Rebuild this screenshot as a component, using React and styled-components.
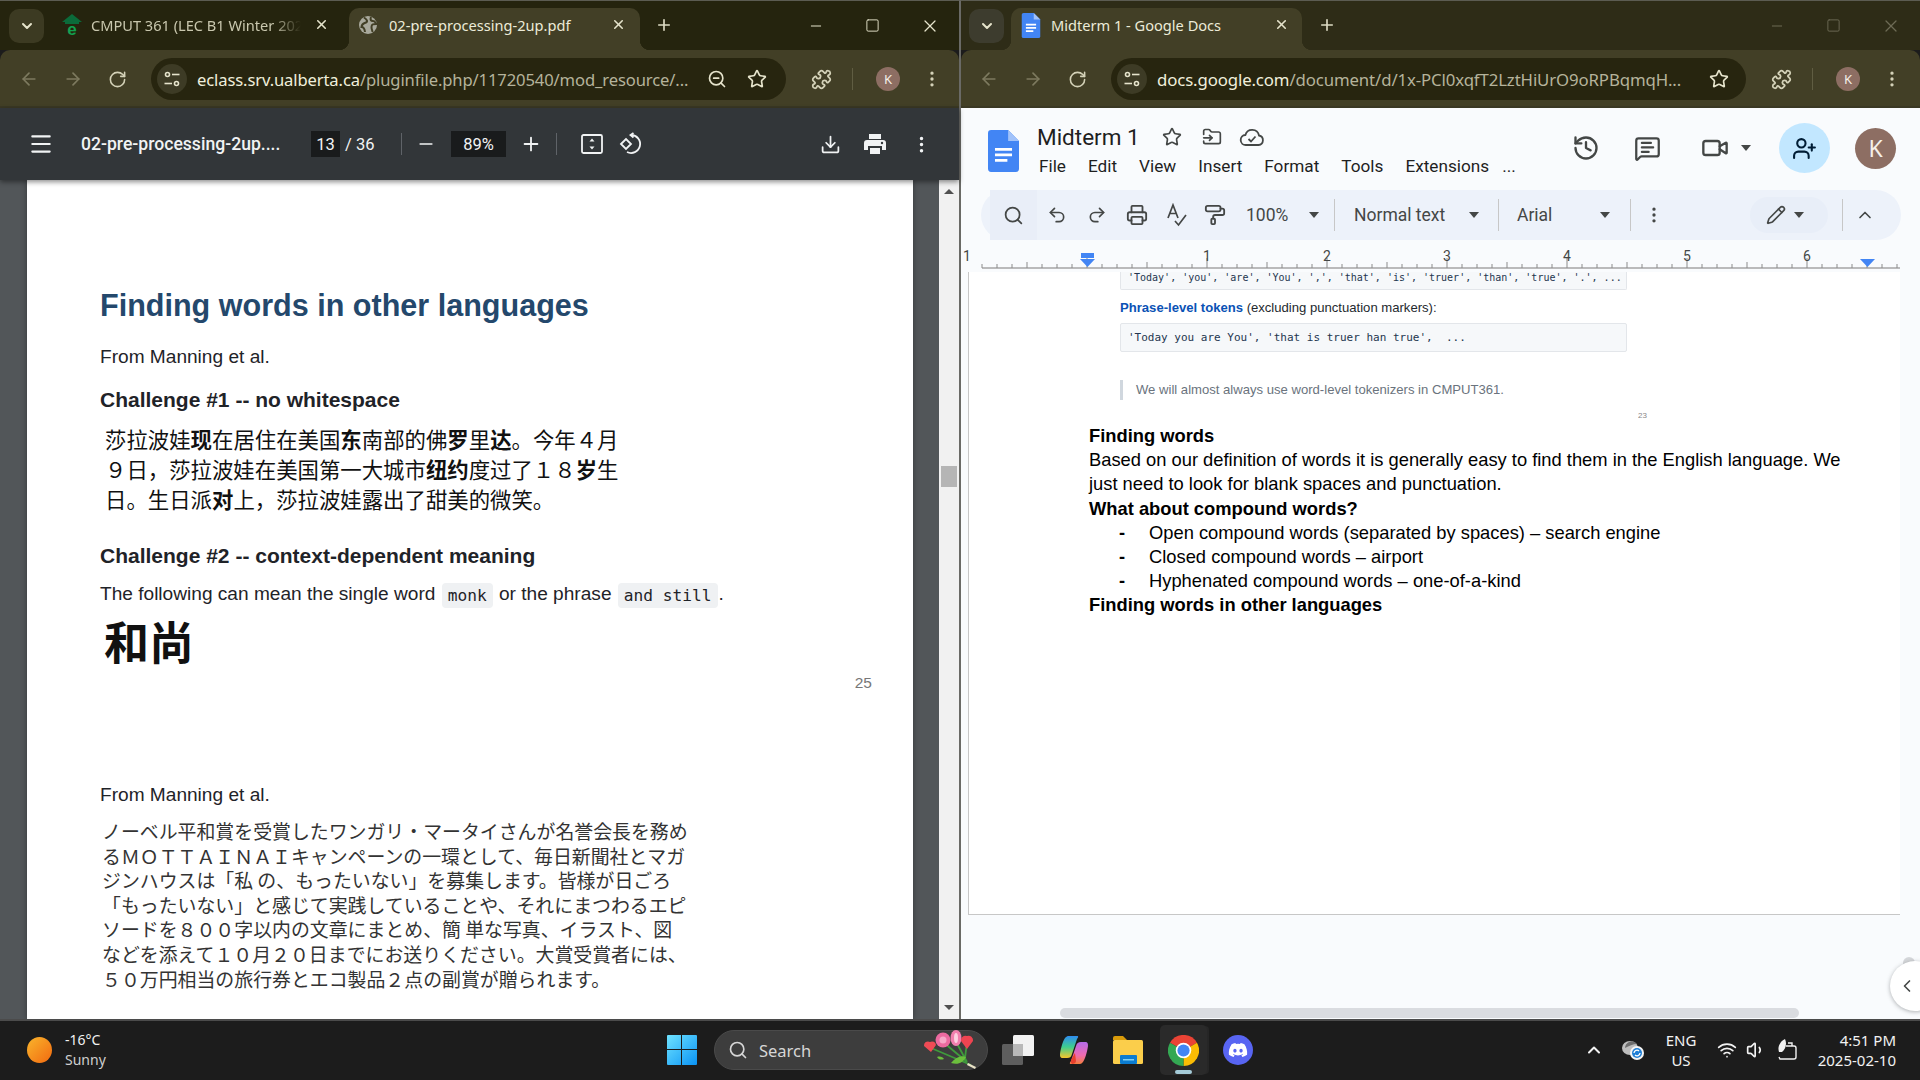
import React from "react";
import styled, { createGlobalStyle } from "styled-components";
import {
  ArrowLeft, ArrowRight, RotateCw, ChevronDown, ChevronUp, ChevronLeft, X, Plus, Minus, Square, ZoomOut, Star,
  Puzzle, EllipsisVertical, Menu, Download, Printer, History, MessageSquareText, Video, UserPlus, Undo2, Redo2,
  PaintRoller, Pencil, FolderInput, Search, Wifi, Volume1,
} from "lucide-react";
import { FaDiscord } from "react-icons/fa";

const UI_FONT = `"Noto Sans", "Open Sans", sans-serif`;
const DOC_FONT = `Roboto, "Liberation Sans", sans-serif`;
const ARIAL = `"Liberation Sans", Arial, sans-serif`;

const GlobalStyle = createGlobalStyle`
  html, body {
    margin: 0;
    padding: 0;
    width: 1920px;
    height: 1080px;
    overflow: hidden;
    background: #1c1c1c;
    font-family: ${ARIAL};
  }
`;

const Desktop = styled.div`
  width: 1920px;
  height: 1080px;
  display: flex;
  flex-direction: column;
  overflow: hidden;
`;

const Windows = styled.div`
  height: 1019px;
  display: flex;
`;

const BrowserWindow = styled.div`
  width: 960px;
  flex-shrink: 0;
  display: flex;
  flex-direction: column;
  border-top: 1px solid #5c5c52;
  box-sizing: border-box;
  ${props => props.$left ? "border-right: 1px solid #6a6a66;" : "border-left: 1px solid #6a6a66;"}
`;

const TabStrip = styled.div`
  height: 49px;
  display: flex;
  align-items: flex-end;
  background: ${props => props.$dim ? "#2e2c17" : "#25240e"};
  padding-left: ${props => props.$pad}px;
`;

const TabMenuBtn = styled.div`
  width: 35px;
  height: 34px;
  margin-bottom: 7px;
  border-radius: 10px;
  background: ${props => props.$dim ? "#3d3c2e" : "#3c3a22"};
  color: #e6e4cc;
  display: flex;
  align-items: center;
  justify-content: center;
`;

const Tab = styled.div`
  position: relative;
  width: ${props => props.$w}px;
  height: 42px;
  box-sizing: border-box;
  padding: 0 0 8px 10px;
  margin-left: ${props => props.$ml || 0}px;
  display: flex;
  align-items: center;
  border-radius: 10px 10px 0 0;
  background: ${props => props.$active ? "#423f26" : "transparent"};
  color: ${props => props.$active ? "#ecebd8" : "#c9c7ae"};
  font: 14.6px ${UI_FONT};
  ${props => props.$active && `
    &::before, &::after {
      content: "";
      position: absolute;
      bottom: 0;
      width: 10px;
      height: 10px;
    }
    &::before { left: -10px; background: radial-gradient(circle at 0 0, transparent 10px, #423f26 10.5px); }
    &::after { right: -10px; background: radial-gradient(circle at 100% 0, transparent 10px, #423f26 10.5px); }
  `}
`;

const TabTitle = styled.span`
  width: ${props => props.$w}px;
  margin-left: ${props => props.$ml}px;
  white-space: nowrap;
  overflow: hidden;
  ${props => props.$fade && "-webkit-mask-image: linear-gradient(90deg, #000 86%, transparent);"}
`;

const TabClose = styled.span`
  position: absolute;
  right: ${props => props.$r}px;
  top: 9px;
  display: flex;
  color: #e6e4cc;
`;

const NewTab = styled.div`
  margin-left: ${props => props.$ml}px;
  height: 42px;
  box-sizing: border-box;
  padding-bottom: 8px;
  display: flex;
  align-items: center;
  color: #dddbc4;
`;

const WindowControls = styled.div`
  margin-left: auto;
  height: 49px;
  display: flex;
  align-items: center;
  padding-right: 1px;
  color: ${props => props.$dim ? "#6d6b55" : "#e6e4cc"};
`;

const ControlBtn = styled.div`
  width: 57px;
  display: flex;
  justify-content: center;
`;

const ChromeBar = styled.div`
  height: 58px;
  flex-shrink: 0;
  box-sizing: border-box;
  display: flex;
  align-items: center;
  padding: 2px 0 0 ${props => props.$pad}px;
  background: #423f26;
  border-bottom: 2px solid #3a3824;
  border-radius: 10px 10px 0 0;
  color: #d4d2b8;
`;

const Slot = styled.div`
  width: ${props => props.$w || 44}px;
  margin-left: ${props => props.$ml || 0}px;
  flex-shrink: 0;
  display: flex;
  align-items: center;
  justify-content: center;
  color: ${props => props.$color || "inherit"};
`;

const Omnibox = styled.div`
  width: ${props => props.$w}px;
  height: 42px;
  margin-left: 11px;
  flex-shrink: 0;
  border-radius: 21px;
  background: #27250f;
  display: flex;
  align-items: center;
  padding-left: 6px;
  box-sizing: border-box;
`;

const SiteInfo = styled.div`
  width: 30px;
  height: 30px;
  border-radius: 50%;
  background: #3d3b25;
  display: flex;
  align-items: center;
  justify-content: center;
`;

const Url = styled.div`
  width: ${props => props.$w}px;
  margin-left: 10px;
  font: ${props => props.$fs}px ${UI_FONT};
  letter-spacing: -0.12px;
  color: #b5b39b;
  white-space: nowrap;
  b { font-weight: 400; color: #f0efdc; }
`;

const BarDivider = styled.div`
  width: 1px;
  height: ${props => props.$h || 22}px;
  margin-left: ${props => props.$ml || 0}px;
  background: ${props => props.$color || "#605d42"};
  flex-shrink: 0;
`;

const Avatar = styled.div`
  width: ${props => props.$size}px;
  height: ${props => props.$size}px;
  margin-left: ${props => props.$ml || 0}px;
  border-radius: 50%;
  background: #8d6e63;
  color: #f5efe9;
  display: flex;
  align-items: center;
  justify-content: center;
  font: ${props => props.$fs}px ${UI_FONT};
  flex-shrink: 0;
`;

/* PDF viewer */
const PdfBar = styled.div`
  height: 72px;
  flex-shrink: 0;
  display: flex;
  align-items: center;
  background: #323639;
  color: #f1f3f4;
  box-shadow: 0 2px 5px rgba(0, 0, 0, 0.45);
  position: relative;
  z-index: 2;
`;

const PdfTitle = styled.div`
  width: 208px;
  margin-left: 19px;
  font: 500 17.6px ${DOC_FONT};
  white-space: nowrap;
`;

const PageInput = styled.div`
  width: 29px;
  height: 26px;
  margin-left: ${props => props.$ml}px;
  background: #191b1c;
  display: flex;
  align-items: center;
  justify-content: center;
  font: 16.5px ${DOC_FONT};
`;

const PageTotal = styled.div`
  width: 40px;
  margin-left: 5px;
  font: 16.5px ${DOC_FONT};
  white-space: nowrap;
`;

const ZoomBox = styled(PageInput)`
  width: 55px;
`;

const PdfViewer = styled.div`
  flex: 1;
  min-height: 0;
  display: flex;
  background: #525659;
`;

const PdfPage = styled.div`
  width: 886px;
  margin-left: 27px;
  background: #fff;
  box-sizing: border-box;
  padding: 105px 0 0 73px;
  overflow: hidden;
  color: #111;
  box-shadow: 0 0 6px rgba(0, 0, 0, 0.35);
`;

const PdfHeading = styled.h1`
  margin: 0;
  font: 700 30.55px/40px ${ARIAL};
  color: #24486c;
`;

const PdfText = styled.p`
  margin: ${props => props.$mt}px 0 0;
  font: 19.1px/24px ${ARIAL};
  color: #1f2328;
  white-space: nowrap;
`;

const PdfSubhead = styled.h2`
  margin: ${props => props.$mt}px 0 0;
  font: 700 21px/28px ${ARIAL};
  color: #1f2328;
`;

const InlineCode = styled.code`
  display: inline-block;
  padding: 0 6px;
  margin: 0 1px;
  height: 25px;
  border-radius: 4px;
  background: #eff1f3;
  font: 16.2px/25px "DejaVu Sans Mono", "Liberation Mono", monospace;
  vertical-align: -1px;
`;

const CjkBlock = styled.div`
  margin: ${props => props.$mt}px 0 0 ${props => props.$ml}px;
  font: ${props => props.$size}px/${props => props.$lh}px ${props => props.$font}, sans-serif;
  font-weight: ${props => props.$weight || 400};
  color: ${props => props.$color || "#111"};
  white-space: nowrap;
  b { font-weight: 700; }
`;

const PageNumber = styled.div`
  margin: ${props => props.$mt}px 0 0;
  padding-right: 41px;
  text-align: right;
  font: 15.5px/20px ${ARIAL};
  color: #777;
`;

const ScrollTrack = styled.div`
  position: relative;
  width: 20px;
  margin-left: 26px;
  background: #f1f1f1;
  display: flex;
  flex-direction: column;
  align-items: center;
  justify-content: space-between;
  padding: 9px 0;
  box-sizing: border-box;
`;

const ScrollThumb = styled.div`
  position: absolute;
  top: 286px;
  left: 2px;
  width: 16px;
  height: 21px;
  background: #b5b5b5;
`;

const Arrow = styled.div`
  width: 0;
  height: 0;
  border-left: 5px solid transparent;
  border-right: 5px solid transparent;
  ${props => props.$down ? "border-top: 5px solid #505050;" : "border-bottom: 5px solid #505050;"}
`;

/* Docs */
const DocsArea = styled.div`
  position: relative;
  flex: 1;
  min-height: 0;
  background: #f9fbfd;
  display: flex;
  flex-direction: column;
  overflow: hidden;
  font-family: ${DOC_FONT};
`;

const DocHeader = styled.div`
  height: 80px;
  display: flex;
  align-items: flex-start;
  padding: 14px 24px 0 27px;
  box-sizing: border-box;
  flex-shrink: 0;
`;

const DocLogo = styled.div`
  margin-top: 7px;
  display: flex;
`;

const TitleBlock = styled.div`
  margin-left: 18px;
  display: flex;
  flex-direction: column;
`;

const TitleRow = styled.div`
  display: flex;
  align-items: center;
  height: 30px;
  color: #444746;
`;

const DocTitle = styled.div`
  width: 120px;
  font-size: 22.5px;
  color: #1f1f1f;
`;

const MenuRow = styled.div`
  display: flex;
  gap: 22px;
  margin-top: 1px;
  margin-left: 2px;
  font-size: 17.2px;
  line-height: 26px;
  color: #1f1f1f;
`;

const MenuMore = styled.span`
  margin-left: -9px;
`;

const HeaderRight = styled.div`
  margin-left: auto;
  display: flex;
  align-items: center;
  height: 52px;
  color: #444746;
`;

const ShareBtn = styled.div`
  width: 51px;
  height: 50px;
  margin-left: 28px;
  border-radius: 50%;
  background: #c2e7ff;
  color: #001d35;
  display: flex;
  align-items: center;
  justify-content: center;
`;

const Caret = styled.div`
  width: 0;
  height: 0;
  margin-left: ${props => props.$ml || 0}px;
  flex-shrink: 0;
  border-left: 5px solid transparent;
  border-right: 5px solid transparent;
  border-top: 6px solid #444746;
`;

const DocToolbar = styled.div`
  height: 50px;
  margin: 2px 19px 0 20px;
  flex-shrink: 0;
  border-radius: 25px;
  background: #edf2fa;
  display: flex;
  align-items: center;
  color: #444746;
  font-size: 17.5px;
`;

const SearchSlot = styled.div`
  width: 47px;
  height: 50px;
  margin-left: 9px;
  background: #e9eef8;
  display: flex;
  align-items: center;
  justify-content: center;
  flex-shrink: 0;
`;

const ToolLabel = styled.div`
  width: ${props => props.$w}px;
  margin-left: ${props => props.$ml}px;
  flex-shrink: 0;
  white-space: nowrap;
`;

const PencilPill = styled.div`
  width: 78px;
  height: 36px;
  margin-left: 73px;
  border-radius: 18px;
  background: #e8eef8;
  display: flex;
  align-items: center;
  padding-left: 16px;
  box-sizing: border-box;
  flex-shrink: 0;
`;

const RulerWrap = styled.div`
  height: 22px;
  margin-top: 10px;
  flex-shrink: 0;
  svg { display: block; }
`;

const DocPage = styled.div`
  width: 932px;
  height: 643px;
  margin-left: 7px;
  flex-shrink: 0;
  box-sizing: border-box;
  background: #fff;
  border-left: 1px solid #c7c7c7;
  border-bottom: 1px solid #c7c7c7;
  padding-left: 120px;
  overflow: hidden;
`;

const ShotCode = styled.div`
  width: 507px;
  margin-left: 31px;
  height: ${props => props.$h}px;
  margin-top: ${props => props.$mt}px;
  box-sizing: border-box;
  background: #f6f8fa;
  border: 1px solid #e3e6ea;
  border-radius: 0 0 2px 2px;
  ${props => props.$clip ? "border-top: none;" : "border-radius: 2px;"}
  padding-left: 7px;
  font: ${props => props.$fs}px/${props => props.$lh}px "DejaVu Sans Mono", monospace;
  color: #24364f;
  white-space: pre;
`;

const ShotText = styled.div`
  margin: ${props => props.$mt}px 0 0 31px;
  font: 13.1px/20px ${ARIAL};
  color: #24292e;
  b { color: #0a52b5; font-weight: 700; }
`;

const ShotQuote = styled.div`
  margin: ${props => props.$mt}px 0 0 31px;
  height: 20px;
  padding-left: 13px;
  border-left: 3px solid #d0d7de;
  font: 13.1px/20px ${ARIAL};
  color: #6a737d;
`;

const ShotPageNo = styled.div`
  margin: 11px 0 0 549px;
  height: 9px;
  overflow: hidden;
  font: 8px/10px ${ARIAL};
  color: #888;
`;

const DocBody = styled.div`
  margin-top: 4px;
  font: 18.33px/24.2px ${ARIAL};
  color: #000;
  width: 770px;
  b { display: block; }
`;

const DocList = styled.ul`
  list-style: none;
  margin: 0;
  padding: 0 0 0 30px;
`;

const DocListItem = styled.li`
  display: flex;
  &::before {
    content: "-";
    width: 30px;
    font-weight: 700;
  }
`;

const HScroll = styled.div`
  position: absolute;
  left: 99px;
  bottom: 1px;
  width: 739px;
  height: 10px;
  border-radius: 5px;
  background: #dadce0;
`;

const SideBump = styled.div`
  position: absolute;
  right: 5px;
  top: 849px;
  width: 12px;
  height: 12px;
  border-radius: 50%;
  background: #d5d7da;
`;

const SideToggle = styled.div`
  position: absolute;
  right: -20px;
  top: 853px;
  width: 50px;
  height: 50px;
  border-radius: 50%;
  background: #fff;
  box-shadow: 0 1px 4px rgba(60, 64, 67, 0.4);
  display: flex;
  align-items: center;
  padding-left: 7px;
  box-sizing: border-box;
  color: #444746;
`;

/* Taskbar */
const Taskbar = styled.div`
  flex: 1;
  display: flex;
  align-items: center;
  background: #1c1c1c;
  border-top: 2px solid #4b4b4b;
  padding-bottom: 1px;
  color: #f2f2f2;
  font-family: ${UI_FONT};
  position: relative;
  z-index: 3;
`;

const Sun = styled.div`
  width: 25px;
  height: 26px;
  margin-left: 27px;
  border-radius: 50%;
  background: linear-gradient(135deg, #f9b52c, #f26a10);
  flex-shrink: 0;
`;

const Weather = styled.div`
  width: 70px;
  margin-left: 13px;
  font-size: 14px;
  line-height: 20px;
  span { color: #cfcfcf; }
`;

const SearchPill = styled.div`
  width: 274px;
  height: 40px;
  margin-left: 17px;
  box-sizing: border-box;
  border-radius: 20px;
  background: #3d3d3d;
  border: 1px solid #4a4a4a;
  display: flex;
  align-items: center;
  padding-left: 13px;
  color: #d6d6d6;
  font-size: 16.5px;
  flex-shrink: 0;
`;

const SearchLabel = styled.span`
  margin-left: 11px;
  width: 162px;
`;

const TaskApp = styled.div`
  position: relative;
  width: ${props => props.$w}px;
  height: 50px;
  margin-left: ${props => props.$ml || 0}px;
  flex-shrink: 0;
  display: flex;
  align-items: center;
  justify-content: center;
  ${props => props.$active && `
    background: #2a2a2a;
    border-radius: 5px;
    box-shadow: 3px 0 0 -1px #262626;
    &::after {
      content: "";
      position: absolute;
      bottom: 1px;
      left: 15px;
      width: 17px;
      height: 4px;
      border-radius: 2px;
      background: #a5cbd8;
    }
  `}
`;

const DiscordBadge = styled.div`
  width: 30px;
  height: 30px;
  border-radius: 50%;
  background: #5865f2;
  color: #fff;
  display: flex;
  align-items: center;
  justify-content: center;
`;

const Lang = styled.div`
  width: 40px;
  margin-left: ${props => props.$ml}px;
  text-align: center;
  font-size: 15px;
  line-height: 20px;
  flex-shrink: 0;
`;

const Clock = styled.div`
  width: 90px;
  margin-left: ${props => props.$ml}px;
  text-align: right;
  font-size: 15px;
  line-height: 20px;
  flex-shrink: 0;
`;

const TuneIcon = () => (
  <svg width="18" height="18" viewBox="0 0 18 18" fill="none" stroke="#e6e4cc" strokeWidth="1.6">
    <circle cx="4.5" cy="4.5" r="2" /><path d="M9 4.5h7.5" />
    <circle cx="13.5" cy="13.5" r="2" /><path d="M1.5 13.5H9" />
  </svg>
);

const EclassIcon = () => (
  <svg width="20" height="22" viewBox="0 0 20 22">
    <path d="M10 0 0 8h3v2h14V8h3z" fill="#0b6b3a" />
    <text x="10" y="21" fontSize="17" fontWeight="700" fontFamily="Liberation Sans" fill="#12a150" textAnchor="middle">e</text>
  </svg>
);

const GlobeIcon = () => (
  <svg width="18" height="18" viewBox="0 0 18 18">
    <circle cx="9" cy="9" r="9" fill="#a9a99c" />
    <path d="M5 1.5c3 2 4 4 2 5S3 7 2.500 11c2 0 3 1 3.500 5M12 1c-1 3 0 4 2 4s2.500 2 3.500 3c-3 0-5 0-5 3s1 3 1 5" fill="none" stroke="#423f26" strokeWidth="2" />
  </svg>
);

const DocsFavicon = ({ w = 20, h = 27 }) => (
  <svg width={w} height={h} viewBox="0 0 20 27">
    <path d="M2 0h11l7 7v18a2 2 0 0 1-2 2H2a2 2 0 0 1-2-2V2a2 2 0 0 1 2-2z" fill="#4285f4" />
    <path d="M13 0l7 7h-7z" fill="#a1c2fa" />
    <path d="M4.500 12.500h11M4.500 16h11M4.500 19.500h8" stroke="#fff" strokeWidth="1.800" />
  </svg>
);

const FitIcon = () => (
  <svg width="24" height="24" viewBox="0 0 24 24" fill="none" stroke="#f1f3f4" strokeWidth="1.800">
    <rect x="2" y="3" width="20" height="18" rx="1.500" />
    <path d="M12 6.500l-2.500 3h5zM12 17.500l-2.500-3h5z" fill="#f1f3f4" stroke="none" />
  </svg>
);

const RotateIcon = () => (
  <svg width="24" height="24" viewBox="0 0 24 24" fill="none" stroke="#f1f3f4" strokeWidth="1.800">
    <path d="M3 12l5-5 5 5-5 5z" />
    <path d="M13 3a9 9 0 1 1-4 17" />
    <path d="M15.500 1 12.500 3l3 2.500" />
  </svg>
);

const PdfPrintIcon = () => (
  <svg width="24" height="24" viewBox="0 0 24 24">
    <path d="M6 2h12v5H6z" fill="#f1f3f4" />
    <path d="M4 8h16a3 3 0 0 1 3 3v7h-4v-4H5v4H1v-7a3 3 0 0 1 3-3z" fill="#f1f3f4" />
    <path d="M7 16h10v6H7z" fill="#f1f3f4" />
    <circle cx="19" cy="11" r="1.200" fill="#323639" />
  </svg>
);

const SpellIcon = () => (
  <svg width="22" height="24" viewBox="0 0 22 24" fill="none" stroke="#444746" strokeWidth="1.700">
    <path d="M2 15 7 2l5 13M3.800 10.500h6.400" />
    <path d="M9 18l3.500 4L20 12" />
  </svg>
);

const CloudCheckIcon = () => (
  <svg width="26" height="22" viewBox="0 0 26 22" fill="none" stroke="#444746" strokeWidth="1.800">
    <path d="M7 19a5 5 0 0 1-.6-10A7 7 0 0 1 20 9.500a4.800 4.800 0 0 1-.5 9.500z" />
    <path d="M9.500 13l2.500 2.500 4.500-5" />
  </svg>
);

const Ruler = () => {
  const ticks = [];
  for (let x = 982; x <= 1900; x += 15) {
    const major = (x - 1087) % 120 === 0;
    const half = (x - 1087) % 60 === 0;
    ticks.push(<line key={x} x1={x - 961} x2={x - 961} y1={major ? 8 : half ? 12 : 14} y2="18" stroke="#8b8b8b" strokeWidth="1" />);
  }
  const nums = [[967, 1], [1207, 1], [1327, 2], [1447, 3], [1567, 4], [1687, 5], [1807, 6]];
  return (
    <svg width="959" height="22" viewBox="0 0 959 22">
      <line x1="21" x2="939" y1="18" y2="18" stroke="#a5a5a5" strokeWidth="1.500" />
      {ticks}
      {nums.map(([x, n]) => (
        <text key={x} x={x - 961} y="11" fontSize="14" fontFamily="Roboto" fill="#444746" textAnchor="middle">{n}</text>
      ))}
      <rect x="120" y="3" width="13" height="5" fill="#4285f4" />
      <path d="M119 9h15l-7.500 8z" fill="#4285f4" />
      <path d="M899 9h15l-7.500 8z" fill="#4285f4" />
    </svg>
  );
};

const WindowsLogo = () => (
  <svg width="30" height="30" viewBox="0 0 30 30">
    <defs>
      <linearGradient id="winG" x1="0" y1="0" x2="1" y2="1">
        <stop offset="0" stopColor="#6fe3ff" />
        <stop offset="1" stopColor="#0a93f5" />
      </linearGradient>
    </defs>
    <path d="M0 1a1 1 0 0 1 1-1h13v14H0zM15 0h14a1 1 0 0 1 1 1v13H15zM0 15h14v15H1a1 1 0 0 1-1-1zM15 15h15v14a1 1 0 0 1-1 1H15z" fill="url(#winG)" />
  </svg>
);

const Bouquet = () => (
  <svg width="56" height="40" viewBox="0 0 56 40">
    <path d="M10 18 50 35M22 12l24 20M34 10l12 22M46 12l-2 16" stroke="#3f9a3c" strokeWidth="1.800" fill="none" />
    <path d="M30 33c5-6 10-8 15-6-3 6-8 8-15 6zM16 27c3-1 6 0 7 2-3 1-5 1-7-2z" fill="#6cbf3d" />
    <path d="M47 33l8 4-1 2-8-4z" fill="#e9e3c7" />
    <path d="M10 22 3 16a4 4 0 0 1 6-4 4 4 0 0 1 6 3z" fill="#ef4b55" />
    <circle cx="22" cy="10" r="7.500" fill="#ec6aa0" />
    <circle cx="22" cy="10" r="3.500" fill="#f7a8c8" />
    <ellipse cx="35" cy="8" rx="5.500" ry="8" fill="#f07fae" />
    <ellipse cx="35" cy="8" rx="2" ry="5" fill="#fbd0e0" />
    <path d="M46 19l-6-8a4.500 4.500 0 0 1 6-5 4.500 4.500 0 0 1 6 5z" fill="#ee4451" />
  </svg>
);

const TaskViewIcon = () => (
  <svg width="32" height="30" viewBox="0 0 32 30">
    <rect x="11" y="0" width="21" height="21" rx="1.500" fill="#f2f2f2" />
    <rect x="0" y="9" width="21" height="21" rx="1.500" fill="#5e5e5e" />
    <rect x="11" y="9" width="10" height="12" fill="#b9b9b9" />
  </svg>
);

const CopilotIcon = () => (
  <svg width="30" height="30" viewBox="0 0 30 30">
    <defs>
      <linearGradient id="copA" x1="0" y1="0" x2="0" y2="1">
        <stop offset="0" stopColor="#2f8cf0" /><stop offset=".5" stopColor="#3ecf8e" /><stop offset="1" stopColor="#f7c62b" />
      </linearGradient>
      <linearGradient id="copB" x1="0" y1="0" x2="0" y2="1">
        <stop offset="0" stopColor="#b46be8" /><stop offset=".6" stopColor="#ee6ab0" /><stop offset="1" stopColor="#f57e3c" />
      </linearGradient>
    </defs>
    <path d="M9 1h9c2 0 1 2 0 3l-5 15c-1 3-2 4-5 4H4c-3 0-3-2-3-4C2 12 4 6 6 3c1-1 2-2 3-2z" fill="url(#copA)" />
    <path d="M21 29h-9c-2 0-1-2 0-3l5-15c1-3 2-4 5-4h4c3 0 3 2 3 4-1 7-3 13-5 16-1 1-2 2-3 2z" fill="url(#copB)" />
    <path d="M13 29c-2-2-1-4 0-6l3-5 1 8c0 2-2 3-4 3z" fill="#e8402e" />
  </svg>
);

const FolderIcon = () => (
  <svg width="30" height="28" viewBox="0 0 30 28">
    <path d="M0 2a2 2 0 0 1 2-2h8l4 4h-14z" fill="#d99b0a" />
    <rect x="0" y="4" width="30" height="24" rx="1.500" fill="#fbce4b" />
    <rect x="7" y="19" width="17" height="9" rx="1" fill="#0b7cd1" />
    <rect x="10" y="23" width="11" height="1.500" fill="#7fd0f5" />
  </svg>
);

const ChromeIcon = () => (
  <svg width="31" height="31" viewBox="0 0 32 32">
    <path d="M16 16 2.100 8A16 16 0 0 1 29.900 8z" fill="#ea4335" />
    <path d="M16 16 29.900 8A16 16 0 0 1 16 32z" fill="#fbbc04" />
    <path d="M16 16 16 32A16 16 0 0 1 2.100 8z" fill="#34a853" />
    <circle cx="16" cy="16" r="8" fill="#fff" />
    <circle cx="16" cy="16" r="6.300" fill="#4285f4" />
  </svg>
);

const OneDriveTray = () => (
  <svg width="24" height="24" viewBox="0 0 24 24">
    <ellipse cx="9" cy="10" rx="8" ry="7" fill="#bdbdbd" />
    <path d="M8 4a7 7 0 0 1 8 2c-4 0-8 2-12 4 0-3 2-5 4-6z" fill="#6d6d6d" />
    <circle cx="16" cy="15" r="7" fill="#f5f5f5" />
    <circle cx="16" cy="15" r="5" fill="#1f7fd6" />
    <path d="M13 15a3 3 0 0 1 5-2M19 15a3 3 0 0 1-5 2" stroke="#fff" strokeWidth="1.300" fill="none" />
  </svg>
);

const BatteryLeaf = () => (
  <svg width="22" height="24" viewBox="0 0 22 24" fill="none" stroke="#f2f2f2" strokeWidth="1.400">
    <path d="M10 8h8a2 2 0 0 1 2 2v9a2 2 0 0 1-2 2H4l-1-2" />
    <path d="M3 14C1 8 5 3 9 1c2 4 1 10-3 13z" fill="#f2f2f2" stroke="none" />
    <path d="M12 5h4v3" />
  </svg>
);

const zhLines = [
  <>莎拉波娃<b>现</b>在居住在美国<b>东</b>南部的佛<b>罗</b>里<b>达</b>。今年４月</>,
  <>９日，莎拉波娃在美国第一大城市<b>纽约</b>度过了１８<b>岁</b>生</>,
  <>日。生日派<b>对</b>上，莎拉波娃露出了甜美的微笑。</>,
];

const jaLines = [
  "ノーベル平和賞を受賞したワンガリ・マータイさんが名誉会長を務め",
  "るＭＯＴＴＡＩＮＡＩキャンペーンの一環として、毎日新聞社とマガ",
  "ジンハウスは「私 の、もったいない」を募集します。皆様が日ごろ",
  "「もったいない」と感じて実践していることや、それにまつわるエピ",
  "ソードを８００字以内の文章にまとめ、簡 単な写真、イラスト、図",
  "などを添えて１０月２０日までにお送りください。大賞受賞者には、",
  "５０万円相当の旅行券とエコ製品２点の副賞が贈られます。",
];

function ChromeTools({ pad, urlWidth, urlSize, hasZoom, children }) {
  return (
    <ChromeBar $pad={pad}>
      <Slot $color="#7d7a5f"><ArrowLeft size={20} /></Slot>
      <Slot $color="#7d7a5f"><ArrowRight size={20} /></Slot>
      <Slot $w={45}><RotateCw size={19} /></Slot>
      <Omnibox $w={635}>
        <SiteInfo><TuneIcon /></SiteInfo>
        <Url $w={urlWidth} $fs={urlSize}>{children}</Url>
        {hasZoom && <Slot $w={30} $ml={14} $color="#e6e4cc"><ZoomOut size={20} /></Slot>}
        <Slot $w={30} $ml={hasZoom ? 10 : 22} $color="#e6e4cc"><Star size={20} /></Slot>
      </Omnibox>
      <Slot $ml={13}><Puzzle size={21} /></Slot>
      <BarDivider $ml={9} />
      <Avatar $size={24} $ml={23} $fs={13}>K</Avatar>
      <Slot $w={26} $ml={19}><EllipsisVertical size={20} /></Slot>
    </ChromeBar>
  );
}

function PdfWindow() {
  return (
    <BrowserWindow $left>
      <TabStrip $pad={9}>
        <TabMenuBtn><ChevronDown size={16} strokeWidth={3} /></TabMenuBtn>
        <Tab $w={298} $ml={7}>
          <Slot $w={20} $ml={1}><EclassIcon /></Slot>
          <TabTitle $w={210} $ml={9} $fade>CMPUT 361 (LEC B1 Winter 2025)</TabTitle>
          <TabClose $r={20}><X size={15} strokeWidth={2.500} /></TabClose>
        </Tab>
        <Tab $w={291} $active>
          <GlobeIcon />
          <TabTitle $w={190} $ml={12}>02-pre-processing-2up.pdf</TabTitle>
          <TabClose $r={14}><X size={15} strokeWidth={2.500} /></TabClose>
        </Tab>
        <NewTab $ml={15}><Plus size={18} strokeWidth={2.200} /></NewTab>
        <WindowControls>
          <ControlBtn><Minus size={16} strokeWidth={1.500} /></ControlBtn>
          <ControlBtn><Square size={15} strokeWidth={1.500} /></ControlBtn>
          <ControlBtn><X size={20} strokeWidth={1.500} /></ControlBtn>
        </WindowControls>
      </TabStrip>
      <ChromeTools pad={7} urlWidth={491} urlSize={16.6} hasZoom>
        <b>eclass.srv.ualberta.ca</b>/pluginfile.php/11720540/mod_resource/...
      </ChromeTools>
      <PdfBar>
        <Slot $w={42} $ml={20}><Menu size={26} /></Slot>
        <PdfTitle>02-pre-processing-2up....</PdfTitle>
        <PageInput $ml={22}>13</PageInput>
        <PageTotal>/ 36</PageTotal>
        <BarDivider $ml={16} $color="#5f6368" />
        <Slot $w={30} $ml={9}><Minus size={20} /></Slot>
        <ZoomBox $ml={10}>89%</ZoomBox>
        <Slot $w={30} $ml={10}><Plus size={22} /></Slot>
        <BarDivider $ml={10} $color="#5f6368" />
        <Slot $w={30} $ml={20}><FitIcon /></Slot>
        <Slot $w={30} $ml={8}><RotateIcon /></Slot>
        <Slot $w={30} $ml={170}><Download size={21} /></Slot>
        <Slot $w={30} $ml={15}><PdfPrintIcon /></Slot>
        <Slot $w={30} $ml={16}><EllipsisVertical size={21} /></Slot>
      </PdfBar>
      <PdfViewer>
        <PdfPage>
          <PdfHeading>Finding words in other languages</PdfHeading>
          <PdfText $mt={20}>From Manning et al.</PdfText>
          <PdfSubhead $mt={17}>Challenge #1 -- no whitespace</PdfSubhead>
          <CjkBlock $mt={10} $ml={5} $size={21.400} $lh={30} $font={`"Noto Sans CJK SC"`}>
            {zhLines.map((l, i) => <div key={i}>{l}</div>)}
          </CjkBlock>
          <PdfSubhead $mt={28}>Challenge #2 -- context-dependent meaning</PdfSubhead>
          <PdfText $mt={12}>The following can mean the single word <InlineCode>monk</InlineCode> or the phrase <InlineCode>and still</InlineCode>.</PdfText>
          <CjkBlock $mt={1} $ml={4} $size={45} $lh={64} $weight={700} $font={`"Noto Sans CJK SC"`}>和尚</CjkBlock>
          <PageNumber $mt={0}>25</PageNumber>
          <PdfText $mt={90}>From Manning et al.</PdfText>
          <CjkBlock $mt={12} $ml={2} $size={18.900} $lh={24.600} $color="#333" $font={`"Noto Sans CJK JP"`}>
            {jaLines.map((l, i) => <div key={i}>{l}</div>)}
          </CjkBlock>
        </PdfPage>
        <ScrollTrack>
          <Arrow />
          <ScrollThumb />
          <Arrow $down />
        </ScrollTrack>
      </PdfViewer>
    </BrowserWindow>
  );
}

function DocsWindow() {
  return (
    <BrowserWindow>
      <TabStrip $dim $pad={8}>
        <TabMenuBtn $dim><ChevronDown size={16} strokeWidth={3} /></TabMenuBtn>
        <Tab $w={291} $ml={7} $active>
          <DocsFavicon w={20} h={25} />
          <TabTitle $w={190} $ml={10}>Midterm 1 - Google Docs</TabTitle>
          <TabClose $r={13}><X size={15} strokeWidth={2.500} /></TabClose>
        </Tab>
        <NewTab $ml={16}><Plus size={18} strokeWidth={2.200} /></NewTab>
        <WindowControls $dim>
          <ControlBtn><Minus size={16} strokeWidth={1.500} /></ControlBtn>
          <ControlBtn><Square size={15} strokeWidth={1.500} /></ControlBtn>
          <ControlBtn><X size={20} strokeWidth={1.500} /></ControlBtn>
        </WindowControls>
      </TabStrip>
      <ChromeTools pad={6} urlWidth={525} urlSize={16.8}>
        <b>docs.google.com</b>/document/d/1x-PCl0xqfT2LztHiUrO9oRPBqmqH...
      </ChromeTools>
      <DocsArea>
        <DocHeader>
          <DocLogo><DocsFavicon w={31} h={44} /></DocLogo>
          <TitleBlock>
            <TitleRow>
              <DocTitle>Midterm 1</DocTitle>
              <Slot $w={30}><Star size={20} /></Slot>
              <Slot $w={30} $ml={10}><FolderInput size={20} /></Slot>
              <Slot $w={30} $ml={10}><CloudCheckIcon /></Slot>
            </TitleRow>
            <MenuRow>
              <span>File</span><span>Edit</span><span>View</span><span>Insert</span>
              <span>Format</span><span>Tools</span><span>Extensions</span>
              <MenuMore>...</MenuMore>
            </MenuRow>
          </TitleBlock>
          <HeaderRight>
            <Slot $w={40}><History size={28} /></Slot>
            <Slot $w={40} $ml={21}><MessageSquareText size={27} /></Slot>
            <Slot $w={40} $ml={28}><Video size={28} /></Slot>
            <Caret $ml={6} />
            <ShareBtn><UserPlus size={25} /></ShareBtn>
            <Avatar $size={41} $ml={25} $fs={23}>K</Avatar>
          </HeaderRight>
        </DocHeader>
        <DocToolbar>
          <SearchSlot><Search size={21} /></SearchSlot>
          <Slot $w={40}><Undo2 size={20} /></Slot>
          <Slot $w={40}><Redo2 size={20} /></Slot>
          <Slot $w={40}><Printer size={22} /></Slot>
          <Slot $w={40}><SpellIcon /></Slot>
          <Slot $w={36}><PaintRoller size={22} /></Slot>
          <ToolLabel $w={52} $ml={13}>100%</ToolLabel>
          <Caret $ml={11} />
          <BarDivider $h={32} $ml={15} $color="#c7c7c7" />
          <ToolLabel $w={108} $ml={19}>Normal text</ToolLabel>
          <Caret $ml={7} />
          <BarDivider $h={32} $ml={19} $color="#c7c7c7" />
          <ToolLabel $w={78} $ml={18}>Arial</ToolLabel>
          <Caret $ml={5} />
          <BarDivider $h={32} $ml={20} $color="#c7c7c7" />
          <Slot $w={46}><EllipsisVertical size={20} /></Slot>
          <PencilPill>
            <Pencil size={20} />
            <Caret $ml={8} />
          </PencilPill>
          <BarDivider $h={32} $ml={14} $color="#c7c7c7" />
          <Slot $w={44}><ChevronUp size={20} /></Slot>
        </DocToolbar>
        <RulerWrap><Ruler /></RulerWrap>
        <DocPage>
          <ShotCode $clip $h={18} $lh={11} $mt={0} $fs={10}>{`'Today', 'you', 'are', 'You', ',', 'that', 'is', 'truer', 'than', 'true', '.', ...`}</ShotCode>
          <ShotText $mt={8}><b>Phrase-level tokens</b> (excluding punctuation markers):</ShotText>
          <ShotCode $h={29} $lh={27} $mt={5} $fs={11}>{`'Today you are You', 'that is truer han true',  ...`}</ShotCode>
          <ShotQuote $mt={28}>We will almost always use word-level tokenizers in CMPUT361.</ShotQuote>
          <ShotPageNo>23</ShotPageNo>
          <DocBody>
            <b>Finding words</b>
            Based on our definition of words it is generally easy to find them in the English language. We just need to look for blank spaces and punctuation.
            <b>What about compound words?</b>
            <DocList>
              <DocListItem>Open compound words (separated by spaces) – search engine</DocListItem>
              <DocListItem>Closed compound words – airport</DocListItem>
              <DocListItem>Hyphenated compound words – one-of-a-kind</DocListItem>
            </DocList>
            <b>Finding words in other languages</b>
          </DocBody>
        </DocPage>
        <HScroll />
        <SideBump />
        <SideToggle><ChevronLeft size={20} /></SideToggle>
      </DocsArea>
    </BrowserWindow>
  );
}

export default function App() {
  return (
    <Desktop>
      <GlobalStyle />
      <Windows>
        <PdfWindow />
        <DocsWindow />
      </Windows>
      <Taskbar>
        <Sun />
        <Weather>-16°C<br /><span>Sunny</span></Weather>
        <TaskApp $w={30} $ml={532}><WindowsLogo /></TaskApp>
        <SearchPill>
          <Search size={20} />
          <SearchLabel>Search</SearchLabel>
          <Bouquet />
        </SearchPill>
        <TaskApp $w={32} $ml={14}><TaskViewIcon /></TaskApp>
        <TaskApp $w={30} $ml={25}><CopilotIcon /></TaskApp>
        <TaskApp $w={30} $ml={24}><FolderIcon /></TaskApp>
        <TaskApp $w={47} $ml={17} $active><ChromeIcon /></TaskApp>
        <TaskApp $w={30} $ml={16}><DiscordBadge><FaDiscord size={20} /></DiscordBadge></TaskApp>
        <Slot $w={24} $ml={329}><ChevronUp size={20} strokeWidth={2.400} /></Slot>
        <Slot $w={24} $ml={15}><OneDriveTray /></Slot>
        <Lang $ml={16}>ENG<br />US</Lang>
        <Slot $w={24} $ml={14}><Wifi size={20} /></Slot>
        <Slot $w={24} $ml={5}><Volume1 size={20} /></Slot>
        <Slot $w={24} $ml={7}><BatteryLeaf /></Slot>
        <Clock $ml={7}>4:51 PM<br />2025-02-10</Clock>
      </Taskbar>
    </Desktop>
  );
}
